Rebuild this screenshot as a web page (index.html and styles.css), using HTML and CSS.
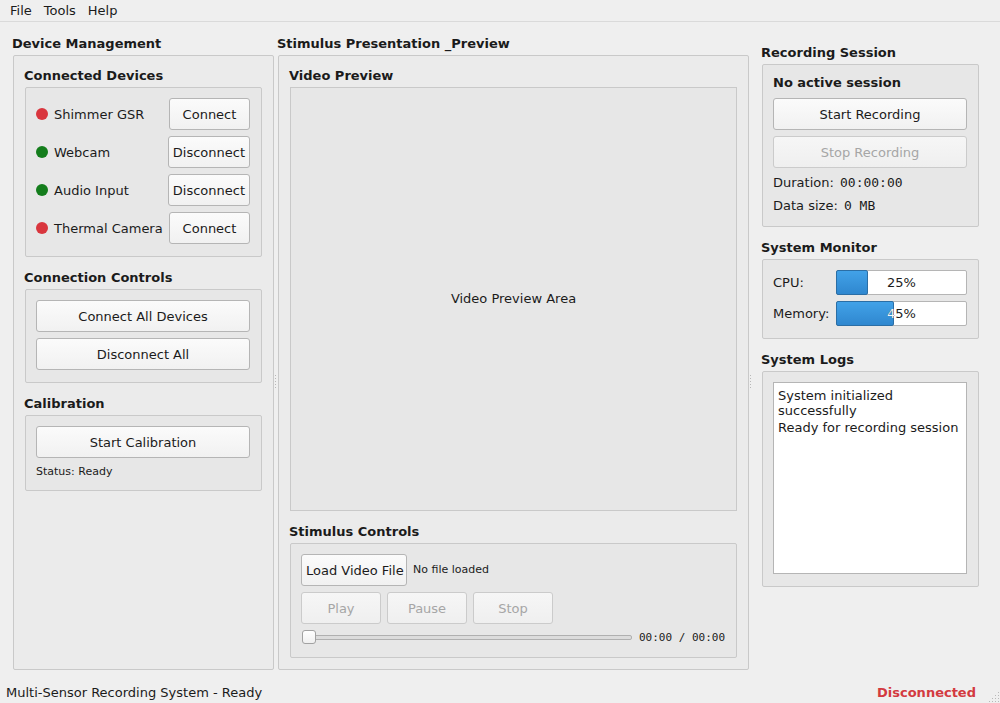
FILE: index.html
```html
<!DOCTYPE html>
<html>
<head>
<meta charset="utf-8">
<link rel="stylesheet" href="styles.css">
</head>
<body>
<div class="window">
  <div class="menubar">
    <span class="menu-item">File</span>
    <span class="menu-item">Tools</span>
    <span class="menu-item">Help</span>
  </div>
  <div class="main">
    <section class="column col-left">
      <h2 class="group-title">Device Management</h2>
      <div class="group-frame">
        <h3 class="group-title">Connected Devices</h3>
        <div class="sub-frame devices">
          <div class="device-row">
            <span class="dot dot-red"></span><span class="device-name">Shimmer GSR</span>
            <button class="btn btn-row">Connect</button>
          </div>
          <div class="device-row">
            <span class="dot dot-green"></span><span class="device-name">Webcam</span>
            <button class="btn btn-row">Disconnect</button>
          </div>
          <div class="device-row">
            <span class="dot dot-green"></span><span class="device-name">Audio Input</span>
            <button class="btn btn-row">Disconnect</button>
          </div>
          <div class="device-row">
            <span class="dot dot-red"></span><span class="device-name">Thermal Camera</span>
            <button class="btn btn-row">Connect</button>
          </div>
        </div>
        <h3 class="group-title spaced">Connection Controls</h3>
        <div class="sub-frame stack">
          <button class="btn btn-full">Connect All Devices</button>
          <button class="btn btn-full">Disconnect All</button>
        </div>
        <h3 class="group-title spaced">Calibration</h3>
        <div class="sub-frame stack">
          <button class="btn btn-full">Start Calibration</button>
          <div class="small-text">Status: Ready</div>
        </div>
      </div>
    </section>
    <div class="splitter splitter-left"><span class="grip-v"></span></div>
    <section class="column col-mid">
      <h2 class="group-title">Stimulus Presentation _Preview</h2>
      <div class="group-frame mid-frame">
        <h3 class="group-title">Video Preview</h3>
        <div class="video-area">Video Preview Area</div>
        <h3 class="group-title spaced">Stimulus Controls</h3>
        <div class="sub-frame controls">
          <div class="ctrl-row">
            <button class="btn btn-load">Load Video File</button>
            <span class="small-text">No file loaded</span>
          </div>
          <div class="ctrl-row">
            <button class="btn btn-media" disabled>Play</button>
            <button class="btn btn-media" disabled>Pause</button>
            <button class="btn btn-media" disabled>Stop</button>
          </div>
          <div class="slider-row">
            <div class="slider">
              <div class="groove"></div>
              <div class="handle"></div>
            </div>
            <span class="time">00:00 / 00:00</span>
          </div>
        </div>
      </div>
    </section>
    <div class="splitter splitter-right"><span class="grip-v"></span></div>
    <section class="column col-right">
      <h2 class="group-title">Recording Session</h2>
      <div class="sub-frame session">
        <div class="session-state">No active session</div>
        <button class="btn btn-full">Start Recording</button>
        <button class="btn btn-full" disabled>Stop Recording</button>
        <div class="info-line">Duration: <span class="mono">00:00:00</span></div>
        <div class="info-line">Data size: <span class="mono">0 MB</span></div>
      </div>
      <h2 class="group-title spaced">System Monitor</h2>
      <div class="sub-frame monitor">
        <span class="mon-label">CPU:</span>
        <div class="progress">
          <div class="chunk" style="width:25%"></div>
          <span class="pct">25%</span>
          <span class="pct pct-light" style="clip-path: inset(0 75% 0 0)">25%</span>
        </div>
        <span class="mon-label">Memory:</span>
        <div class="progress">
          <div class="chunk" style="width:45%"></div>
          <span class="pct">45%</span>
          <span class="pct pct-light" style="clip-path: inset(0 55% 0 0)">45%</span>
        </div>
      </div>
      <h2 class="group-title spaced">System Logs</h2>
      <div class="sub-frame logs">
        <div class="log-box">
          <p>System initialized successfully</p>
          <p>Ready for recording session</p>
        </div>
      </div>
    </section>
  </div>
  <div class="statusbar">
    <span class="status-text">Multi-Sensor Recording System - Ready</span>
    <span class="status-conn">Disconnected</span>
    <span class="size-grip"></span>
  </div>
</div>
</body>
</html>
```
FILE: styles.css
```css
* { box-sizing: border-box; }
html, body {
  margin: 0;
  padding: 0;
  background: #efefef;
}
body {
  font-family: "DejaVu Sans", "Liberation Sans", sans-serif;
  font-size: 13px;
  color: #1b1b1b;
}
.window {
  width: 1000px;
  height: 703px;
  display: flex;
  flex-direction: column;
  overflow: hidden;
}
.menubar {
  height: 22px;
  border-bottom: 1px solid #dadada;
  padding-left: 4px;
  padding-top: 1px;
  display: flex;
  align-items: center;
  line-height: 16px;
}
.menu-item {
  padding: 0 6px;
}
.main {
  display: flex;
  height: 648px;
  padding: 13px 0 0 13px;
}
.column {
  display: flex;
  flex-direction: column;
}
.col-left { width: 261px; }
.col-mid { width: 471px; }
.col-right { width: 217px; padding-top: 9px; }
.group-title {
  font-size: 13px;
  font-weight: bold;
  margin: 0 0 3px -1px;
  line-height: 17px;
  height: 17px;
}
.group-title.spaced { margin-top: 12px; }
.group-frame {
  flex: 1;
  background: #ebebeb;
  border: 1px solid #c9c9c9;
  border-radius: 2px;
  padding: 11px 11px 11px 11px;
  display: flex;
  flex-direction: column;
}
.sub-frame {
  background: #e7e7e7;
  border: 1px solid #c9c9c9;
  border-radius: 2px;
  padding: 10px 11px 12px 10px;
}
.devices {
  display: flex;
  flex-direction: column;
  gap: 6px;
}
.device-row {
  display: flex;
  align-items: center;
  height: 32px;
}
.dot {
  width: 12px;
  height: 12px;
  border-radius: 50%;
  margin-right: 6px;
  flex: none;
}
.dot-red { background: #d9363e; }
.dot-green { background: #147d1c; }
.device-name { flex: 1; white-space: nowrap; }
.btn {
  font-family: "DejaVu Sans", "Liberation Sans", sans-serif;
  font-size: 13px;
  color: #1b1b1b;
  height: 32px;
  border: 1px solid #b5b5b5;
  border-radius: 3px;
  background: linear-gradient(#fbfbfb, #f1f1f1);
  padding: 0 4px;
  margin: 0;
  white-space: nowrap;
}
.btn:disabled {
  color: #a6a6a6;
  border-color: #cbcbcb;
  background: linear-gradient(#f6f6f6, #efefef);
}
.btn-row { min-width: 81px; }
.stack {
  display: flex;
  flex-direction: column;
  gap: 6px;
}
.btn-full { width: 100%; }
.small-text {
  font-size: 11px;
  line-height: 14px;
}
.stack .small-text { margin-top: 1px; margin-bottom: -1px; }
.mid-frame { padding-bottom: 11px; }
.video-area {
  flex: 1;
  background: #e7e7e7;
  border: 1px solid #c9c9c9;
  display: flex;
  align-items: center;
  justify-content: center;
  padding-bottom: 2px;
}
.controls {
  display: flex;
  flex-direction: column;
  gap: 6px;
}
.ctrl-row {
  display: flex;
  align-items: center;
  gap: 6px;
}
.btn-load { width: 106px; }
.btn-media { width: 80px; }
.slider-row {
  display: flex;
  align-items: center;
  height: 15px;
  gap: 7px;
  padding-left: 1px;
}
.slider {
  flex: 1;
  position: relative;
  height: 15px;
  display: flex;
  align-items: center;
}
.groove {
  width: 100%;
  height: 5px;
  border: 1px solid #b0b0b0;
  border-radius: 2px;
  background: #dcdcdc;
}
.handle {
  position: absolute;
  left: 0;
  top: 0;
  width: 14px;
  height: 14px;
  border: 1px solid #a2a2a2;
  border-radius: 3px;
  background: linear-gradient(#ffffff, #f0f0f0);
}
.time {
  font-family: "DejaVu Sans Mono", "Liberation Mono", monospace;
  font-size: 11px;
}
.splitter {
  position: relative;
  display: flex;
  align-items: center;
}
.splitter-left { width: 4px; padding-left: 1px; }
.splitter-right { width: 13px; padding-left: 1px; }
.grip-v {
  width: 1px;
  height: 14px;
  background: repeating-linear-gradient(#b8b8b8 0 1px, transparent 1px 3px);
  margin-top: 58px;
}
.session {
  padding-top: 10px;
  padding-bottom: 12px;
  display: flex;
  flex-direction: column;
}
.session-state {
  font-weight: bold;
  line-height: 16px;
  margin-bottom: 7px;
}
.session .btn + .btn { margin-top: 6px; }
.info-line {
  line-height: 16px;
  margin-top: 7px;
}
.info-line + .info-line { margin-top: 7px; }
.mono {
  font-family: "DejaVu Sans Mono", "Liberation Mono", monospace;
  font-size: 13px;
  margin-left: 2px;
}
.monitor {
  display: grid;
  grid-template-columns: 57px 1fr;
  column-gap: 6px;
  row-gap: 6px;
  align-items: center;
  padding-bottom: 12px;
}
.progress {
  position: relative;
  height: 25px;
  background: #ffffff;
  border: 1px solid #b5b5b5;
  border-radius: 2px;
}
.chunk {
  position: absolute;
  left: -1px;
  top: -1px;
  bottom: -1px;
  border: 1px solid #2b6ea5;
  border-radius: 2px;
  background: linear-gradient(#42a2e8, #2f87cf);
}
.pct {
  position: absolute;
  inset: 0;
  display: flex;
  align-items: center;
  justify-content: center;
}
.pct-light { color: #f4f8fc; }
.logs {
  padding-bottom: 12px;
}
.log-box {
  height: 192px;
  background: #ffffff;
  border: 1px solid #b5b5b5;
  padding: 5px 4px;
  line-height: 15px;
}
.log-box p { margin: 0 0 2px 0; }
.statusbar {
  flex: 1;
  display: flex;
  align-items: center;
  padding: 11px 24px 0 6px;
  position: relative;
}
.status-text { flex: 1; }
.status-conn {
  color: #d33a3f;
  font-weight: bold;
}
.size-grip {
  position: absolute;
  right: 1px;
  bottom: 1px;
  width: 11px;
  height: 11px;
  background: radial-gradient(circle, #b9b9b9 0.6px, transparent 0.8px) 0 0 / 3px 3px;
  clip-path: polygon(100% 0, 100% 100%, 0 100%);
}
```
